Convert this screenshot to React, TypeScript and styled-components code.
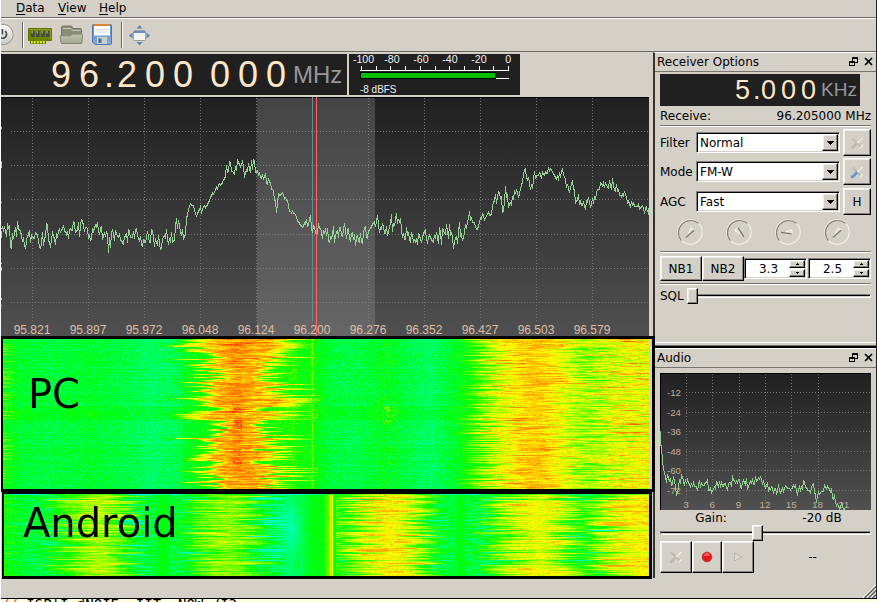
import React, { useLayoutEffect, useRef } from "react";
import styled, { createGlobalStyle, css } from "styled-components";

const Global = createGlobalStyle`
  *{box-sizing:border-box}
  html,body{margin:0;padding:0;overflow:hidden;background:#d4d0c8}
  body{font:12px/16px "DejaVu Sans",sans-serif;color:#000}
`;

const SANS = '"Liberation Sans",Arial,sans-serif';

/* ---------- shared primitives ---------- */
const raised = css`
  background:#d4d0c8;
  border:1px solid;
  border-color:#fff #000 #000 #fff;
  box-shadow:inset -1px -1px 0 #86837d, inset 1px 1px 0 #efede8;
`;
const sunken = css`
  background:#fff;
  border:1px solid;
  border-color:#808080 #fff #fff #808080;
  box-shadow:inset 1px 1px 0 #000, inset -1px -1px 0 #d4d0c8;
`;

/* ---------- window ---------- */
const Window = styled.div`
  width:877px;height:602px;display:flex;flex-direction:column;
  border-left:1px solid #fff;overflow:hidden;background:#d4d0c8;
`;
const Chrome = styled.div`
  height:598px;flex:none;display:flex;flex-direction:column;border-right:1px solid #222;
`;
const MenuBar = styled.div`
  height:19px;flex:none;display:flex;border-bottom:1px solid #fff;
  box-shadow:inset 0 -1px 0 #6b6862;line-height:16px;
`;
const MenuItem = styled.span<{ $w: number }>`width:${p => p.$w}px;flex:none;white-space:pre;`;
const Key = styled.span`text-decoration:underline;text-underline-offset:2px;text-decoration-thickness:1px;`;
const ToolBar = styled.div`
  height:33px;flex:none;display:flex;align-items:center;
  box-shadow:inset 0 -1px 0 #6b6862;
`;
const ToolSvg = styled.svg`display:block;flex:none;margin-top:-2px;`;
const Main = styled.div`flex:1;display:flex;min-height:0;`;

/* ---------- left column ---------- */
const Left = styled.div`width:652px;flex:none;display:flex;flex-direction:column;`;
const Readouts = styled.div`height:45px;flex:none;display:flex;gap:2px;padding:2px 0;`;
const FreqPanel = styled.div`
  width:346px;height:41px;background:#202020;display:flex;align-items:center;padding-left:50px;
`;
const Digit = styled.span<{ $w: number; $s: number }>`
  width:${p => p.$w}px;flex:none;font:${p => p.$s}px/40px ${SANS};color:#ffe6c8;white-space:pre;
`;
const Unit = styled.span<{ $s: number; $l: number }>`
  font:${p => p.$s}px/38px ${SANS};color:#96969a;margin-left:${p => p.$l}px;
`;
const MeterSvg = styled.svg`display:block;background:#202020;flex:none;`;
const Plot = styled.svg`display:block;flex:none;`;

const WaterfallFrame = styled.div<{ $h: number; $main?: boolean }>`
  height:${p => p.$h}px;flex:none;position:relative;overflow:hidden;
  ${p => p.$main
    ? "width:655px;margin-left:-1px;border:3px solid #000;background:#d4d0c8;"
    : "width:650px;margin-left:1px;border:solid #000;border-width:2px 3px 3px 2px;background:#000;"}
  z-index:1;
`;
const Canvas = styled.canvas`display:block;`;
const WaterLabel = styled.span<{ $x: number; $y: number }>`
  position:absolute;left:${p => p.$x}px;top:${p => p.$y}px;
  font:40px/50px "DejaVu Sans",sans-serif;
`;

/* ---------- docks ---------- */
const Docks = styled.div`width:223px;flex:none;display:flex;flex-direction:column;`;
const Dock = styled.section<{ $h: number }>`
  height:${p => p.$h}px;flex:none;border-left:2px solid #35332f;border-top:1px solid #fff;
  display:flex;flex-direction:column;
`;
const DockTitle = styled.header`
  height:19px;flex:none;display:flex;align-items:center;border-bottom:1px solid #77746d;
  padding:0 1px 0 2px;justify-content:space-between;
`;
const Splitter = styled.div`
  height:6px;flex:none;border-top:1px solid #fff;border-bottom:2px solid #000;margin-left:2px;
  box-shadow:inset 0 -1px 0 #77746d;
`;
const Body = styled.div`padding:0 5px;display:flex;flex-direction:column;`;
const OffsetPanel = styled.div`
  width:200px;height:32px;margin-top:2px;background:#202020;display:flex;align-items:center;
  padding-left:75px;overflow:hidden;
`;
const Row = styled.div<{ $h: number; $mt?: number }>`
  height:${p => p.$h}px;margin-top:${p => p.$mt || 0}px;display:flex;align-items:center;flex:none;
`;
const Between = styled(Row)`justify-content:space-between;`;
const Rule = styled.hr<{ $mt: number }>`
  width:211px;height:2px;border:0;margin:${p => p.$mt}px 0 0;background:#77746d;border-bottom:1px solid #fff;
`;
const Label = styled.span<{ $w: number }>`width:${p => p.$w}px;flex:none;white-space:nowrap;`;
const Combo = styled.div`
  ${sunken} width:144px;height:21px;padding:2px 1px 2px 3px;display:flex;align-items:center;
  justify-content:space-between;flex:none;
`;
const ComboArrow = styled.span`
  ${raised} width:16px;height:17px;display:flex;align-items:center;justify-content:center;
`;
const Button = styled.div<{ $w: number; $h: number; $ml?: number }>`
  ${raised} width:${p => p.$w}px;height:${p => p.$h}px;margin-left:${p => p.$ml || 0}px;
  display:flex;align-items:center;justify-content:center;flex:none;
`;
const Dials = styled.div`
  height:26px;margin:3px 0 0 17px;display:flex;gap:23px;
`;
const Spin = styled.div<{ $w: number; $ml: number }>`
  ${sunken} width:${p => p.$w}px;height:21px;margin-left:${p => p.$ml}px;
  display:flex;align-items:center;padding:2px 1px 2px 2px;flex:none;
`;
const SpinValue = styled.span`flex:1;text-align:center;padding-left:1px;`;
const SpinArrows = styled.div`width:16px;display:flex;flex-direction:column;gap:1px;`;
const SpinArrow = styled.span`
  ${raised} height:8px;display:flex;align-items:center;justify-content:center;
`;
const SliderBox = styled.div<{ $w: number }>`
  width:${p => p.$w}px;height:16px;display:flex;align-items:center;position:relative;flex:none;
`;
const Groove = styled.div`
  height:4px;width:100%;border:1px solid;border-color:#808080 #fff #fff #808080;background:#000;
  box-shadow:inset 0 -1px 0 #d4d0c8;
`;
const Handle = styled.div<{ $x: number }>`
  ${raised} position:absolute;left:${p => p.$x}px;top:0;width:11px;height:16px;
`;
const GainRow = styled.div`
  height:15px;line-height:16px;display:grid;grid-template-columns:102px 109px;text-align:center;
`;
const GainValue = styled.span`padding-left:11px;`;
const RecordText = styled.span`flex:1;text-align:center;`;
const StatusBar = styled.footer`height:20px;flex:none;display:flex;justify-content:flex-end;align-items:flex-end;`;
const Behind = styled.div`
  height:4px;flex:none;background:#ffffdc;border-top:1px solid #000;overflow:hidden;
  font:14px/17px "DejaVu Sans Mono",monospace;white-space:pre;
`;
const BehindText = styled.div`margin-top:-3px;`;
const Red = styled.span`color:#ff4060;`;

/* ---------- data helpers ---------- */
function rng(seed: number) {
  let a = seed;
  return () => {
    a = (a + 0x6d2b79f5) | 0;
    let t = Math.imul(a ^ (a >>> 15), 1 | a);
    t = (t + Math.imul(t ^ (t >>> 7), 61 | t)) ^ t;
    return ((t ^ (t >>> 14)) >>> 0) / 4294967296;
  };
}
type Pt = [number, number];
function lerp(pts: Pt[], x: number) {
  if (x <= pts[0][0]) return pts[0][1];
  for (let i = 1; i < pts.length; i++) {
    if (x <= pts[i][0]) {
      const [x0, y0] = pts[i - 1];
      const [x1, y1] = pts[i];
      return y0 + ((y1 - y0) * (x - x0)) / (x1 - x0);
    }
  }
  return pts[pts.length - 1][1];
}
function trace(pts: Pt[], x0: number, x1: number, amp: (x: number) => number, seed: number) {
  const r = rng(seed);
  const out: string[] = [];
  for (let x = x0; x <= x1; x++) {
    const n = r() + r() - 1;
    out.push(`${x + 0.5},${Math.round(lerp(pts, x) + n * amp(x))}`);
  }
  return out.join(" ");
}

const SPECTRUM: Pt[] = [[1,230],[4,229],[6,235],[8,222],[10,240],[14,236],[18,228],[22,240],[33,236],[36,238],[40,248],[43,238],[46,225],[49,246],[56,235],[62,229],[75,229],[80,228],[90,230],[100,231],[106,237],[108,246],[112,236],[120,236],[124,246],[128,234],[130,240],[136,231],[140,242],[145,240],[151,233],[157,246],[166,237],[172,243],[176,226],[182,234],[184,241],[186,218],[189,206],[192,204],[196,216],[200,209],[205,208],[210,197],[216,189],[221,183],[225,174],[228,170],[229,162],[232,172],[236,165],[240,162],[244,172],[248,169],[253,164],[257,174],[262,175],[268,184],[273,193],[276,211],[278,194],[282,193],[286,199],[289,210],[295,215],[300,227],[306,226],[309,219],[312,226],[316,226],[320,232],[325,227],[328,235],[336,234],[345,231],[352,239],[359,241],[364,231],[368,230],[373,221],[380,228],[388,227],[395,222],[401,230],[405,238],[411,237],[416,243],[422,235],[430,240],[440,236],[447,230],[451,233],[455,246],[459,229],[463,238],[466,223],[469,216],[475,228],[481,219],[489,213],[492,214],[495,198],[498,191],[501,198],[502,216],[505,194],[508,202],[511,200],[515,190],[520,191],[524,174],[528,176],[530,192],[533,178],[541,175],[548,171],[556,177],[562,176],[566,182],[569,187],[572,182],[575,198],[580,200],[583,205],[592,201],[596,192],[601,190],[605,188],[610,184],[617,187],[622,195],[629,203],[634,203],[640,207],[645,209],[649,216]];
const spectrumAmp = (x: number) => {
  if (x > 185 && x < 226) return 4;
  if (x > 275 && x < 306) return 4;
  if (x > 225 && x < 275) return 8;
  if (x > 575) return 8;
  if (x > 460) return 9;
  return 12;
};

const AUDIO: Pt[] = [[661,445],[662,463],[665,477],[669,482],[674,480],[676,492],[680,482],[682,477],[686,485],[700,485],[708,484],[711,490],[716,486],[725,485],[733,478],[740,484],[748,484],[758,479],[766,485],[776,490],[783,489],[795,487],[803,488],[812,488],[816,497],[821,492],[827,488],[832,493],[836,503],[839,506],[841,502],[844,511]];

const RULE_X = [32, 88, 144, 200, 256, 312, 368, 424, 480, 536, 592];
const FREQS = ["95.821","95.897","95.972","96.048","96.124","96.200","96.276","96.352","96.427","96.503","96.579"];

function Spectrum() {
  return (
    <Plot width="648" height="239" viewBox="1 97 648 239" shapeRendering="crispEdges">
      <defs>
        <linearGradient id="plotBg" x1="0" y1="0" x2="0" y2="1">
          <stop offset="0" stopColor="#202020" />
          <stop offset="1" stopColor="#505050" />
        </linearGradient>
      </defs>
      <rect x="1" y="97" width="648" height="239" fill="url(#plotBg)" />
      <rect x="1" y="97" width="648" height="1" fill="#000" />
      <g stroke="#747474" strokeDasharray="1 2">
        {RULE_X.map(x => <line key={x} x1={x + .5} x2={x + .5} y1="98" y2="321" />)}
        {[131, 165, 199, 234, 268, 302].map(y => <line key={y} x1="11" x2="649" y1={y + .5} y2={y + .5} />)}
      </g>
      <rect x="257" y="98" width="118" height="238" fill="#a0a0a0" fillOpacity=".28" />
      <rect x="312" y="97" width="1" height="223" fill="#788296" />
      <g fill="#dcbfa6" fontFamily={SANS} fontSize="12" textAnchor="middle">
        {FREQS.map((f, i) => <text key={f} x={RULE_X[i]} y="334">{f}</text>)}
      </g>
      <g fill="#c9b8a6">
        <rect x="1" y="127" width="1" height="2" /><rect x="1" y="161" width="1" height="7" />
        <rect x="1" y="202" width="1" height="1" /><rect x="1" y="231" width="1" height="7" />
        <rect x="1" y="263" width="1" height="1" /><rect x="1" y="267" width="1" height="4" />
        <rect x="1" y="298" width="1" height="2" /><rect x="1" y="305" width="1" height="1" />
      </g>
      <polyline points={trace(SPECTRUM, 1, 649, spectrumAmp, 57)} fill="none" stroke="#97d097" />
      <rect x="316" y="97" width="1" height="239" fill="#ff6464" />
    </Plot>
  );
}

function Meter() {
  return (
    <MeterSvg width="171" height="41" viewBox="349 54 171 41">
      <g fill="#f2f2f2" fontFamily={SANS} fontSize="10.6" textAnchor="middle">
        {["-100", "-80", "-60", "-40", "-20", "0"].map((t, i) => (
          <text key={t} x={[363.5, 392, 421, 450, 479, 508.3][i]} y="63">{t}</text>
        ))}
      </g>
      <text x="360" y="93" fill="#f2f2f2" fontFamily={SANS} fontSize="10.6" textLength="36.5" lengthAdjust="spacingAndGlyphs">-8 dBFS</text>
      <g fill="#fff" shapeRendering="crispEdges">
        <rect x="360" y="70" width="149" height="1" />
        {[361, 376, 390, 405, 420, 435, 449, 464, 479, 493, 508].map(x => (
          <rect key={x} x={x} y={66} width="1" height={5} />
        ))}
        <rect x="360" y="78" width="149" height="1" />
        <rect x="360" y="72" width="136" height="7" fill="#000" />
        <rect x="361" y="73" width="134" height="5" fill="#00c000" />
      </g>
    </MeterSvg>
  );
}

/* ---------- waterfall ---------- */
function colour(v: number): [number, number, number] {
  const c = Math.max(0, Math.min(3, v));
  if (c < 1) return [0, 255, Math.round(255 * (1 - c))];
  if (c < 2) return [Math.round(255 * (c - 1)), 255, 0];
  return [255, Math.round(255 * (3 - c)), 0];
}
const PC_BASE: Pt[] = [[3,.92],[20,.82],[50,.76],[90,.84],[130,.72],[150,.62],[180,.7],[200,.82],[290,.98],[312,1],[330,.78],[350,.72],[387,.86],[430,.62],[462,.92],[480,1.05],[649,1]];
const PC_STATION: Pt[] = [[462,0],[475,.25],[492,.75],[510,1],[530,1.22],[550,1.12],[568,.88],[580,.6],[592,.6],[608,.85],[630,.98],[649,.98]];
const AN_BASE: Pt[] = [[3,1.1],[14,.9],[42,.7],[55,1.1],[75,1.45],[92,1.7],[105,1.72],[125,1.4],[138,.85],[150,.72],[163,1],[175,.65],[195,1.1],[215,1.5],[235,1.55],[250,1.25],[262,.85],[275,.55],[290,.45],[300,.65],[312,.95],[322,.95],[329,1.45],[335,.95],[350,1.45],[372,1.98],[390,2.12],[408,1.98],[430,1.25],[440,.8],[452,.7],[460,1],[467,.75],[478,.65],[488,1.1],[505,1.6],[525,1.92],[550,1.92],[568,1.55],[580,1.1],[592,1.15],[610,1.8],[630,1.98],[649,2.02]];

/* Horizontally smeared noise, one value per column. */
function smear(r: () => number, w: number, keep: number) {
  const out = new Float32Array(w);
  let n = 0;
  for (let x = 0; x < w; x++) {
    n = n * keep + (r() - 0.5) * (1 - keep) * 3.2;
    out[x] = n;
  }
  return out;
}

function paintPc(ctx: CanvasRenderingContext2D, w: number, h: number) {
  const img = ctx.createImageData(w, h);
  const r = rng(77);
  let wide = 0;
  for (let y = 0; y < h; y++) {
    wide = wide * .3 + (r() - .5) * 22;
    const tone = (r() - .5) * .14 + (y > 66 && y < 82 ? .1 : 0);
    const quiet = (y > 67 && y < 72) || (y > 80 && y < 88) || (y > 109 && y < 112) || (y > 121 && y < 125);
    const swell = 7 * Math.sin(y / 9 + 1) + (y < 12 ? 8 : 0);
    let lw = 30 + swell + wide + (r() < .28 ? r() * 32 : 0);
    let rw = 34 + swell + (r() - .5) * 20 + (r() < .28 ? r() * 30 : 0);
    if (y > 71 && y < 81) { lw = 38 + r() * 34; rw = 36 + r() * 32; }
    if (y > 58 && y < 68) rw += 14 * r() + 8;
    if (quiet) { lw = 12 + r() * 16; rw = 12 + r() * 16; }
    lw = Math.max(12, Math.min(lw, 66)); rw = Math.max(12, Math.min(rw, 66));
    const rowShift = (r() - .5) * 26;
    const edge = r();
    const streaks = smear(r, w, .9);
    const level = (r() - .55) * .45;
    for (let x = 0; x < w; x++) {
      const X = x + 3;
      const s = streaks[x];
      let v = lerp(PC_BASE, X) + tone + (r() - .5) * .38;
      const dx = X - 239;
      const d = dx < 0 ? -dx / lw : dx / rw;
      if (d < 1) {
        v = 2.38 - .15 * d + s * .6 + (r() - .5) * .08 - (d > .6 ? (d - .6) * 1.3 : 0);
        if (Math.abs(dx + 2) < 5 && r() < .5) v += .06 + (quiet ? .3 : 0);
      } else if (d < 1.3) v += (1.3 - d) * 2.2;
      else if (Math.abs(dx) < 58) v += .12;
      const env = lerp(PC_STATION, X + rowShift);
      if (env > 0) {
        const mid = 1 - Math.min(1, Math.abs(X - 535) / 50);
        v = lerp(PC_BASE, X) + env + (r() - .5) * .14;
        v += s * Math.min(1, env * 2) * (.85 - mid * .45) + level * (1 - mid * .8);
      }
      if (X === 312) v = 1.38 + (r() - .5) * .7;
      if (X === 311 || X === 313) v += .16;
      if (X < 20 && edge > .72) v += (20 - X) * .03;
      if (Math.abs(X - 387) < 12 && r() < .12) v += .3;
      if (((y > 67 && y < 72) || (y > 80 && y < 87)) && Math.abs(X - 387) < 4 && r() < .55) v += .5;
      const i = (y * w + x) * 4;
      const c = colour(Math.min(v, 2.8));
      img.data[i] = c[0]; img.data[i + 1] = c[1]; img.data[i + 2] = c[2]; img.data[i + 3] = 255;
    }
  }
  ctx.putImageData(img, 0, 0);
}

function paintAndroid(ctx: CanvasRenderingContext2D, w: number, h: number) {
  const img = ctx.createImageData(w, h);
  const r = rng(4242);
  const centres = [98, 232, 392, 540, 640];
  const walks = [0, 0, 0, 0, 0];
  for (let y = 0; y < h; y++) {
    for (let k = 0; k < 5; k++) walks[k] = walks[k] * .35 + (r() - .5) * .85 - (r() < .08 ? .45 : 0);
    const deep = y === 5 || y === 26 || y === 36 || y === 42 || y === 66;
    const shift = (r() - .5) * 28;
    const streaks = smear(r, w, .88);
    for (let x = 0; x < w; x++) {
      const X = x + 4;
      const still = (X > 155 && X < 170) || (X > 285 && X < 336) || (X > 453 && X < 466);
      let v = lerp(AN_BASE, still ? X : X + shift) + (r() - .5) * .22;
      if (!still) v += streaks[x] * .45;
      for (let k = 0; k < 5; k++) {
        const d = Math.abs(X - centres[k]);
        if (d < 58 && !still) {
          const shape = .15 + .85 * Math.sin((d / 58) * Math.PI);
          v += walks[k] * shape * .8 - (deep ? .55 * shape : 0);
        }
      }
      if (X > 262 && X < 300) v += Math.cos(y / 11) * .12;
      if (X === 330 || X === 332) v = 1.9;
      if (X === 331) v = 1.6;
      if (y === 0) v -= .5;
      const i = (y * w + x) * 4;
      const c = colour(Math.min(v, 2.35));
      img.data[i] = c[0]; img.data[i + 1] = c[1]; img.data[i + 2] = c[2]; img.data[i + 3] = 255;
    }
  }
  ctx.putImageData(img, 0, 0);
}

function Waterfall({ w, h, paint }: { w: number; h: number; paint: (c: CanvasRenderingContext2D, w: number, h: number) => void }) {
  const ref = useRef<HTMLCanvasElement>(null);
  useLayoutEffect(() => {
    const ctx = ref.current?.getContext("2d");
    if (ctx) paint(ctx, w, h);
  }, [w, h, paint]);
  return <Canvas ref={ref} width={w} height={h} />;
}

/* ---------- icons ---------- */
const ToolIcons = () => (
  <ToolSvg width="160" height="31" viewBox="1 19 160 31">
    <defs>
      <linearGradient id="pw" x1="0" y1="0" x2="0" y2="1"><stop offset="0" stopColor="#fafafa" /><stop offset="1" stopColor="#c8c8c6" /></linearGradient>
      <linearGradient id="fo" x1="0" y1="0" x2="0" y2="1"><stop offset="0" stopColor="#bfc3ae" /><stop offset="1" stopColor="#a3a792" /></linearGradient>
      <linearGradient id="fl" x1="0" y1="0" x2="0" y2="1"><stop offset="0" stopColor="#5d8fca" /><stop offset="1" stopColor="#80aadb" /></linearGradient>
    </defs>
    <circle cx="3" cy="34.5" r="10.2" fill="url(#pw)" stroke="#96948e" />
    <path d="M1 38q4.500 1 5.500-3 .4-2.600-1.500-4M2.400 29v5.500" fill="none" stroke="#4b4b4b" strokeWidth="1.6" />
    <g shapeRendering="crispEdges"><rect x="22" y="22" width="1" height="26" fill="#66645e" /><rect x="23" y="22" width="1" height="26" fill="#fff" /><rect x="121" y="22" width="1" height="26" fill="#66645e" /><rect x="122" y="22" width="1" height="26" fill="#fff" /></g>
    <path d="M28.5 28.500h23v12h-6v3h-15v-3h-2z" fill="#6c8400" stroke="#5e7110" />
    <path d="M29.500 29.500h21v10" fill="none" stroke="#8fa520" />
    {[31, 36, 41, 46].map(x => <g key={x}><rect x={x} y="31" width="3.600" height="6" fill="#454a43" /><rect x={x + .5} y="31" width="1.300" height="2.500" fill="#a5a9a2" /></g>)}
    {[31, 34, 37, 40, 43].map(x => <rect key={x} x={x} y="41" width="1.800" height="2.500" fill="#d9ef14" />)}
    <path d="M61.500 43V27.200q0-1.200 1.200-1.200H71q1 0 1.300 1.200l.5 1.300h7.700q1 0 1 1V43z" fill="#8a8e79" stroke="#74785f" />
    <path d="M63 28.500h8l1.500 2h8" stroke="#c7cab8" fill="none" />
    <path d="M62 43.500h19q.8 0 .9-1l.6-7.500q0-1-1-1H72l-1.300 1.700H61q-1 0-.9 1L61 42.500q0 1 1 1z" fill="url(#fo)" stroke="#84886f" />
    <path d="M93.500 24.500h17q1 0 1 1v18q0 1-1 1H95l-2.500-2.500V25.500q0-1 1-1z" fill="url(#fl)" stroke="#4b78b3" />
    <rect x="94" y="24" width="16" height="2" fill="#df8233" />
    <rect x="94" y="26" width="16" height="9.500" fill="#fbfbfb" />
    <path d="M96 29.500h12M96 32h12" stroke="#dadada" />
    <rect x="97" y="37" width="10" height="7" fill="#c9cdd0" /><rect x="98.500" y="38.500" width="3" height="4.500" fill="#4d6c8f" />
    <rect x="133.500" y="30.500" width="12" height="10" rx="1" fill="#f2f2ee" stroke="#9c9c98" />
    <rect x="134" y="31" width="11" height="2" fill="#6d8fbf" />
    <path d="M139.500 25l3 3.500h-6zM139.500 45.500l3-3.500h-6zM129 35.500l3.500-3v6zM150 35.500l-3.500-3v6z" fill="#5b84b8" />
  </ToolSvg>
);
const Down = () => <svg width="7" height="4" viewBox="0 0 7 4" shapeRendering="crispEdges"><path d="M0 0h7v1H6v1H5v1H4v1H3V3H2V2H1V1H0z" /></svg>;
const Small = ({ up }: { up?: boolean }) => <svg width="3" height="2" viewBox="0 0 3 2" shapeRendering="crispEdges"><path d={up ? "M1 0h1v1h1v1H0V1h1z" : "M0 0h3v1H2v1H1V1H0z"} /></svg>;
const Tools = ({ active }: { active?: boolean }) => (
  <svg width="16" height="16" viewBox="0 0 16 16">
    <path d="M3.500 3.500L12.500 12.500" stroke="#bcb9b2" strokeWidth="1.800" />
    <path d="M2 4.500q2.500 1.200 3-2" stroke="#c8c5be" strokeWidth="1.500" fill="none" />
    <path d="M11.500 13.500q.3-2.800 2.500-2.500" stroke="#efede9" strokeWidth="1.500" fill="none" />
    <path d="M13.500 3L7.500 8.800" stroke="#ecebe7" strokeWidth="1.700" />
    <path d="M7.300 9L3.200 12.800" stroke={active ? "#5f8ecb" : "#bdbab4"} strokeWidth="3" strokeLinecap="round" />
    {active && <path d="M6.600 8.800L3 12.200" stroke="#a8c6ea" strokeWidth=".9" />}
  </svg>
);
const WindowButtons = () => (
  <svg width="26" height="11" viewBox="0 0 26 11" shapeRendering="crispEdges" fill="none" stroke="#000">
    <path d="M3.500 4V.5h5v5H6M3 1.500h6" /><path d="M.5 4.500h5v4h-5zM0 5.500h6" />
    <path d="M16 1l7 7M23 1l-7 7" strokeWidth="1.700" shapeRendering="auto" />
  </svg>
);
const Dial = ({ a }: { a: number }) => (
  <svg width="26" height="26" viewBox="0 0 26 26">
    <circle cx="13" cy="13" r="12.200" fill="none" stroke="#f4f2ee" strokeWidth="1.100" />
    <path d="M21.600 4.400A12.200 12.200 0 0 0 4.400 21.600" fill="none" stroke="#827f78" strokeWidth="1.100" />
    <g transform={`rotate(${a} 13 13)`}>
      <path d="M17 11L7.500 13.500 17 15z" fill="#dedbd4" />
      <path d="M17 11v4M17 11l-6 1.600" stroke="#fff" strokeWidth=".9" />
      <path d="M17 15L6 13.400" stroke="#77746d" strokeWidth="1.200" />
    </g>
  </svg>
);

function AudioPlot() {
  return (
    <Plot width="211" height="137" viewBox="660 373 211 137" shapeRendering="crispEdges">
      <defs><linearGradient id="audioBg" x1="0" y1="0" x2="0" y2="1"><stop offset="0" stopColor="#202020" /><stop offset="1" stopColor="#505050" /></linearGradient></defs>
      <rect x="660" y="373" width="211" height="137" fill="url(#audioBg)" />
      <path d="M660.500 510V373.500H871" fill="none" stroke="#000" />
      <g stroke="#747474" strokeDasharray="1 2">
        {[686, 712, 739, 765, 791, 818, 844].map(x => <line key={x} x1={x + .5} x2={x + .5} y1="374" y2={x === 844 ? 374 : 501} />)}
        {[392, 412, 431, 451, 470, 490].map(y => <line key={y} x1="686" x2="871" y1={y + .5} y2={y + .5} />)}
      </g>
      <g fill="#c4ad98" fontFamily={SANS} fontSize="8.500">
        {[-12, -24, -36, -48, -60, -72].map((n, i) => <text key={n} x="667" y={396 + i * 19.600} textLength="14" lengthAdjust="spacingAndGlyphs">{n}</text>)}
      </g>
      <g fill="#c4ad98" fontFamily={SANS} fontSize="9" textAnchor="middle">
        {[3, 6, 9, 12, 15, 18, 21].map((n, i) => <text key={n} x={686 + i * 26.300} y="508" textLength={n > 9 ? 11 : 5.500} lengthAdjust="spacingAndGlyphs">{n}</text>)}
      </g>
      <rect x="660" y="431" width="1" height="15" fill="#8fce8f" />
      <polyline points={trace(AUDIO, 661, 844, x => (x < 666 ? 2 : 8), 58)} fill="none" stroke="#8fce8f" />
    </Plot>
  );
}

function Select({ value }: { value: string }) {
  return <Combo><span>{value}</span><ComboArrow><Down /></ComboArrow></Combo>;
}
function SpinBox({ value, w, ml }: { value: string; w: number; ml: number }) {
  return (
    <Spin $w={w} $ml={ml}>
      <SpinValue>{value}</SpinValue>
      <SpinArrows><SpinArrow><Small up /></SpinArrow><SpinArrow><Small /></SpinArrow></SpinArrows>
    </Spin>
  );
}

export default function App() {
  return (
    <>
      <Global />
      <Window>
        <Chrome>
          <MenuBar>
            <MenuItem $w={15}>{" "}</MenuItem>
            <MenuItem $w={42}><Key>D</Key>ata</MenuItem>
            <MenuItem $w={41}><Key>V</Key>iew</MenuItem>
            <MenuItem $w={40}><Key>H</Key>elp</MenuItem>
          </MenuBar>
          <ToolBar><ToolIcons /></ToolBar>
          <Main>
            <Left>
              <Readouts>
                <FreqPanel>
                  <Digit $w={28} $s={36}>9</Digit><Digit $w={25} $s={36}>6</Digit><Digit $w={13} $s={36}>.</Digit>
                  <Digit $w={28} $s={36}>2</Digit><Digit $w={28} $s={36}>0</Digit><Digit $w={37} $s={36}>0</Digit>
                  <Digit $w={28} $s={36}>0</Digit><Digit $w={28} $s={36}>0</Digit><Digit $w={20} $s={36}>0</Digit>
                  <Unit $s={24} $l={7}>MHz</Unit>
                </FreqPanel>
                <Meter />
              </Readouts>
              <Spectrum />
              <WaterfallFrame $h={156} $main>
                <Waterfall w={646} h={150} paint={paintPc} />
                <WaterLabel $x={25} $y={30}>PC</WaterLabel>
              </WaterfallFrame>
              <WaterfallFrame $h={87}>
                <Waterfall w={645} h={82} paint={paintAndroid} />
                <WaterLabel $x={19} $y={4}>Android</WaterLabel>
              </WaterfallFrame>
            </Left>
            <Docks>
              <Dock $h={290}>
                <DockTitle><span>Receiver Options</span><WindowButtons /></DockTitle>
                <Body>
                  <OffsetPanel>
                    <Digit $w={18} $s={27}>5</Digit><Digit $w={8} $s={27}>.</Digit>
                    <Digit $w={20} $s={27}>0</Digit><Digit $w={20} $s={27}>0</Digit><Digit $w={16} $s={27}>0</Digit>
                    <Unit $s={19} $l={4}>KHz</Unit>
                  </OffsetPanel>
                  <Between $h={19}><span>Receive:</span><span>96.205000 MHz</span></Between>
                  <Rule $mt={0} />
                  <Row $h={29} $mt={1}><Label $w={36}>Filter</Label><Select value="Normal" /><Button $w={28} $h={27} $ml={3}><Tools /></Button></Row>
                  <Row $h={29}><Label $w={36}>Mode</Label><Select value="FM-W" /><Button $w={28} $h={27} $ml={3}><Tools active /></Button></Row>
                  <Row $h={29} $mt={1}><Label $w={36}>AGC</Label><Select value="Fast" /><Button $w={28} $h={27} $ml={3}>H</Button></Row>
                  <Dials><Dial a={-50} /><Dial a={-132} /><Dial a={0} /><Dial a={-50} /></Dials>
                  <Rule $mt={6} />
                  <Row $h={25} $mt={3}>
                    <Button $w={42} $h={25}>NB1</Button><Button $w={42} $h={25}>NB2</Button>
                    <SpinBox value="3.3" w={63} ml={0} /><SpinBox value="2.5" w={63} ml={1} />
                  </Row>
                  <Rule $mt={2} />
                  <Row $h={16} $mt={3}><Label $w={27}>SQL</Label><SliderBox $w={184}><Groove /><Handle $x={0} /></SliderBox></Row>
                </Body>
              </Dock>
              <Splitter />
              <Dock $h={230}>
                <DockTitle><span>Audio</span><WindowButtons /></DockTitle>
                <Body>
                  <Row $h={137} $mt={5}><AudioPlot /></Row>
                  <GainRow><span>Gain:</span><GainValue>-20 dB</GainValue></GainRow>
                  <SliderBox $w={211}><Groove /><Handle $x={92} /></SliderBox>
                  <Row $h={32}>
                    <Button $w={32} $h={32}><Tools /></Button>
                    <Button $w={30} $h={32}><svg width="12" height="12"><circle cx="6" cy="6" r="4.800" fill="#e81419" stroke="#bd3a3a" /><path d="M3 5q0-3 3-3t3 3z" fill="#f05a5a" /></svg></Button>
                    <Button $w={32} $h={32}><svg width="12" height="14"><path d="M2.500 3v8l7-4z" fill="#dedbd4" stroke="#b8b5ae" /></svg></Button>
                    <RecordText>--</RecordText>
                  </Row>
                </Body>
              </Dock>
            </Docks>
          </Main>
          <StatusBar>
            <svg width="13" height="13" viewBox="0 0 13 13">
              <path d="M0 13L13 0M4 13l9-9M8 13l5-5" stroke="#fff" strokeWidth="1.200" />
              <path d="M1.500 13L13 1.500M5.500 13L13 5.500M9.500 13L13 9.500" stroke="#66645e" strokeWidth="1.600" />
            </svg>
          </StatusBar>
        </Chrome>
        <Behind><BehindText><Red>// </Red>ISP'I dNOIE. IIT. NOW /I3</BehindText></Behind>
      </Window>
    </>
  );
}
